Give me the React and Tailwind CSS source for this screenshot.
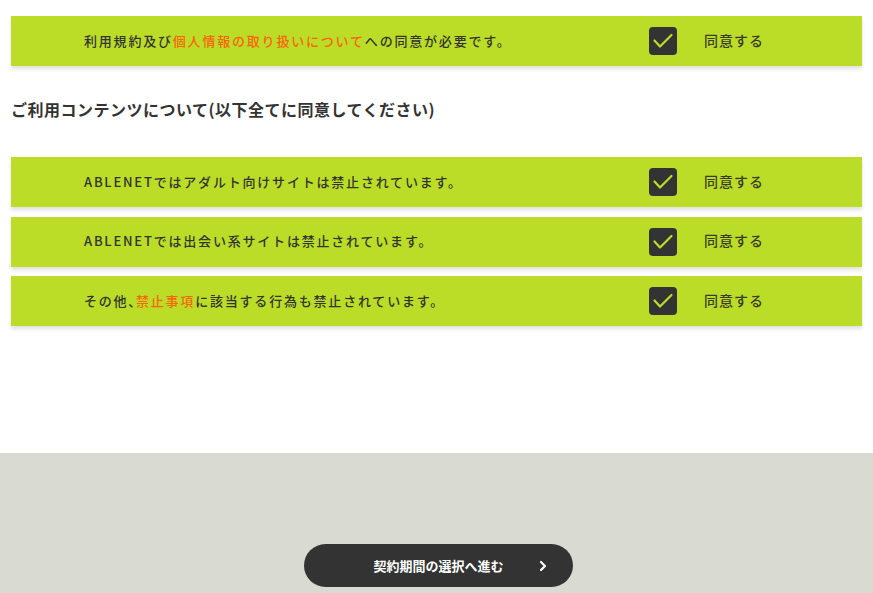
const font = { fontFamily: '"Noto Sans CJK JP", "Noto Sans", sans-serif' };

const CheckBox = () => (
  <span className="flex size-[28px] shrink-0 items-center justify-center rounded-[4px] bg-[#333333]">
    <svg width="28" height="28" viewBox="0 0 28 28" fill="none">
      <polyline
        points="5.5,13.5 11,19.5 22.5,8"
        stroke="#bbdd27"
        strokeWidth="2.2"
        strokeLinecap="round"
        strokeLinejoin="round"
      />
    </svg>
  </span>
);

const AgreeRow = ({ children }) => (
  <div className="flex h-[50px] items-center bg-[#bbdd27] shadow-[0_3px_4px_rgba(0,0,0,0.12)]">
    <p className="-mt-[1px] w-[638px] shrink-0 pl-[73px] text-[13px] font-medium tracking-[1.8px] text-[#333333]">
      {children}
    </p>
    <CheckBox />
    <span className="-mt-[2px] ml-[27px] text-[14px] font-medium tracking-[1px] text-[#3a3a2a]">
      同意する
    </span>
  </div>
);

const Em = ({ children }) => <span className="text-[#f7660c]">{children}</span>;

export default function App() {
  return (
    <div className="flex min-h-[593px] flex-col bg-white" style={font}>
      <div className="flex flex-col px-[11px] pt-[16px]">
        <AgreeRow>
          利用規約及び<Em>個人情報の取り扱いについて</Em>への同意が必要です。
        </AgreeRow>

        <h2 className="mt-[31px] text-[16px] font-bold leading-[24px] tracking-[0.5px] text-[#333333]">
          ご利用コンテンツについて(以下全てに同意してください)
        </h2>

        <div className="mt-[36px] flex flex-col gap-[9.5px]">
          <AgreeRow>ABLENETではアダルト向けサイトは禁止されています。</AgreeRow>
          <AgreeRow>ABLENETでは出会い系サイトは禁止されています。</AgreeRow>
          <AgreeRow>
            その他<span className="tracking-[1px] [font-feature-settings:'palt']">、</span>
            <Em>禁止事項</Em>に該当する行為も禁止されています。
          </AgreeRow>
        </div>
      </div>

      <div className="mt-[127px] flex flex-1 justify-center bg-[#d9dad2] pt-[91px]">
        <button className="relative ml-[4px] flex h-[43px] w-[269px] items-center justify-center rounded-full bg-[#333333] text-[13px] font-bold text-white">
          契約期間の選択へ進む
          <svg
            className="absolute right-[24px]"
            width="12"
            height="12"
            viewBox="0 0 12 12"
            fill="none"
          >
            <polyline
              points="4,2 8,6 4,10"
              stroke="white"
              strokeWidth="2.2"
              strokeLinecap="round"
              strokeLinejoin="round"
            />
          </svg>
        </button>
      </div>
    </div>
  );
}
